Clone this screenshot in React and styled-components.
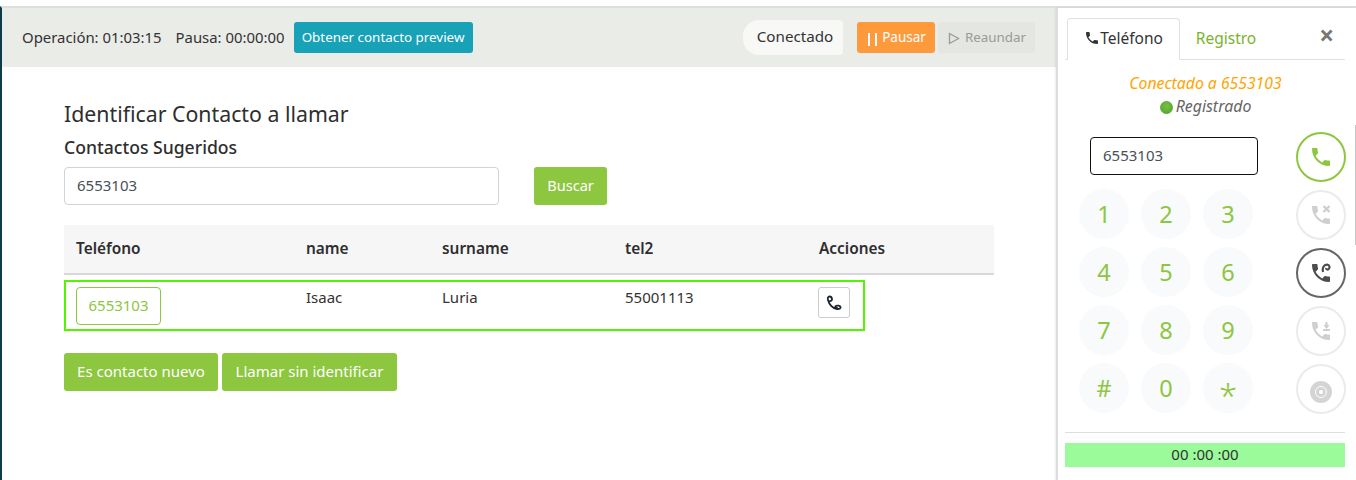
import styled, { createGlobalStyle } from "styled-components";

const GlobalStyle = createGlobalStyle`
  html, body {
    margin: 0;
    padding: 0;
    height: 480px;
    overflow: hidden;
    background: #fff;
    font-family: "Noto Sans", "Open Sans", sans-serif;
    color: #333;
  }
  * {
    box-sizing: border-box;
  }
`;

const Page = styled.div`
  height: 480px;
  padding-top: 6px;
`;

const Frame = styled.div`
  display: flex;
  height: 474px;
  border-top: 2px solid #dedede;
  border-left: 2px solid #0c3c4c;
`;

const Main = styled.main`
  flex: 1;
  min-width: 0;
`;

const StatusBar = styled.header`
  display: flex;
  align-items: center;
  height: 59px;
  padding: 0 21px 0 20px;
  background: #eaece8;
  font-size: 14.9px;
`;

const StatusText = styled.span`
  margin: 0 ${(p) => p.$gap}px 2px 0;
  white-space: nowrap;
`;

const Spacer = styled.div`
  flex: 1;
`;

const Pill = styled.div`
  display: flex;
  align-items: center;
  justify-content: center;
  width: 100px;
  height: 35px;
  margin-right: 14px;
  padding: 0 0 3px 4px;
  border-radius: 16px 4px 4px 16px;
  background: #f8f8f6;
  font-size: 15.2px;
`;

const Button = styled.button`
  display: inline-flex;
  align-items: center;
  justify-content: center;
  height: ${(p) => p.$height || 38}px;
  width: ${(p) => (p.$width ? `${p.$width}px` : "auto")};
  padding: 0 0 2px;
  border: 0;
  border-radius: 3px;
  background: ${(p) => p.$bg};
  color: ${(p) => p.$color || "#fff"};
  font-family: inherit;
  font-size: ${(p) => p.$size || 15}px;
  white-space: nowrap;
`;

const HeaderActions = styled.div`
  display: flex;
  gap: 3px;
`;

const PauseBars = styled.span`
  width: 9px;
  height: 13px;
  margin: 5px 5px 0 2px;
  border-left: 2px solid #fff;
  border-right: 2px solid #fff;
`;

const PlayMark = styled.svg`
  width: 12px;
  height: 13px;
  margin: 4px 5px 0 1px;
`;

const Content = styled.section`
  padding: 33px 62px;
`;

const Title = styled.h1`
  margin: 0;
  font-size: 21.3px;
  font-weight: 400;
  line-height: 28px;
  color: #2e2e2e;
`;

const Subtitle = styled.h2`
  margin: 7px 0 8px;
  font-size: 17.6px;
  font-weight: 500;
  line-height: 24px;
  color: #2e2e2e;
`;

const SearchRow = styled.div`
  display: flex;
  gap: 35px;
`;

const SearchInput = styled.div`
  display: flex;
  align-items: center;
  width: 435px;
  height: 38px;
  padding: 0 12px 2px;
  border: 1px solid #ced4da;
  border-radius: 4px;
  font-size: 15px;
  color: #495057;
`;

const Table = styled.div`
  width: 930px;
  margin-top: 20px;
`;

const columns = "230px 136px 183px 194px 1fr";

const HeadRow = styled.div`
  display: grid;
  grid-template-columns: ${columns};
  align-items: center;
  height: 50px;
  padding: 0 0 2px 12px;
  background: #f6f6f6;
  border-bottom: 2px solid #d8d8d8;
  font-size: 15.4px;
  font-weight: 600;
  color: #2e2e2e;
`;

const ContactRow = styled.div`
  display: grid;
  grid-template-columns: ${columns};
  align-items: start;
  width: 801px;
  height: 51px;
  margin-top: 5px;
  padding: 5px 0 0 10px;
  border: 2px solid #52f500;
  font-size: 15px;
  color: #333;
`;

const PhoneLink = styled.button`
  width: 85px;
  height: 38px;
  padding: 0 0 2px;
  border: 1px solid #8dc63f;
  border-radius: 4px;
  background: #fff;
  color: #8dc63f;
  font-family: inherit;
  font-size: 15px;
`;

const CallIconButton = styled.button`
  display: flex;
  align-items: center;
  justify-content: center;
  width: 32px;
  height: 31px;
  margin-left: -1px;
  padding: 0;
  border: 1px solid #ccc;
  border-radius: 3px;
  background: #fff;
`;

const ActionsRow = styled.div`
  display: flex;
  gap: 4px;
  margin-top: 22px;
`;

const Side = styled.aside`
  display: flex;
  flex-direction: column;
  width: 300px;
  border-left: 2px solid #dcdcdc;
  box-shadow: -1px 0 2px rgba(0, 0, 0, 0.08);
  padding: 10px 10px 0 7px;
`;

const Tabs = styled.nav`
  display: flex;
  align-items: flex-end;
  width: 280px;
  height: 42px;
  padding-left: 2px;
  border-bottom: 1px solid #dee2e6;
`;

const Tab = styled.div`
  display: flex;
  align-items: center;
  justify-content: center;
  width: ${(p) => p.$width}px;
  height: 42px;
  margin-bottom: -1px;
  padding-bottom: 2px;
  border: 1px solid ${(p) => (p.$active ? "#dee2e6" : "transparent")};
  border-bottom-color: ${(p) => (p.$active ? "#fff" : "transparent")};
  border-radius: 4px 4px 0 0;
  background: ${(p) => (p.$active ? "#fff" : "transparent")};
  color: ${(p) => (p.$active ? "#333" : "#7ab42e")};
  font-size: 15.5px;
`;

const Close = styled.span`
  margin: 0 0 12px auto;
  padding-right: 11px;
  color: #777;
  font-size: 26px;
  font-weight: 700;
  line-height: 24px;
`;

const CallStatus = styled.div`
  margin-top: 13px;
  text-align: center;
  font-size: 15.75px;
  font-style: italic;
  line-height: 21px;
  color: #ffa500;
`;

const Registered = styled.div`
  display: flex;
  align-items: center;
  justify-content: center;
  margin-top: 2px;
  font-size: 15.9px;
  font-style: italic;
  line-height: 21px;
  color: #666;
`;

const Dot = styled.span`
  width: 13px;
  height: 13px;
  margin: 2px 3px 0 0;
  border-radius: 50%;
  background: radial-gradient(circle at 50% 40%, #7cc03c, #45a035);
`;

const Dialer = styled.div`
  display: grid;
  grid-template-columns: 1fr 50px;
  margin: 15px 0 0 14px;
  width: 267px;
`;

const PadColumn = styled.div`
  display: flex;
  flex-direction: column;
`;

const NumberInput = styled.div`
  display: flex;
  align-items: center;
  width: 168px;
  height: 38px;
  margin: 5px 0 14px 11px;
  padding: 0 12px 2px;
  border: 1px solid #111;
  border-radius: 4px;
  font-size: 15px;
  color: #495057;
`;

const Keys = styled.div`
  display: grid;
  grid-template-columns: repeat(3, 50px);
  gap: 8px 12px;
`;

const Key = styled.div`
  display: flex;
  align-items: center;
  justify-content: center;
  width: 50px;
  height: 50px;
  border-radius: 50%;
  background: #f8fafb;
  color: #8dc63f;
  font-size: 23.5px;
`;

const StarKey = styled(Key)`
  padding-top: 14px;
  font-size: 33px;
  font-weight: 300;
`;

const CallColumn = styled.div`
  display: flex;
  flex-direction: column;
  gap: 8px;
`;

const RoundButton = styled.div`
  display: flex;
  align-items: center;
  justify-content: center;
  width: 50px;
  height: 50px;
  border: 2px solid ${(p) => p.$ring};
  border-radius: 50%;
  color: ${(p) => p.$ink};
`;

const Divider = styled.hr`
  width: 280px;
  margin: 18px 0 0 0;
  border: 0;
  border-top: 1px solid #ddd;
`;

const Timer = styled.div`
  width: 280px;
  height: 24px;
  margin-top: 10px;
  padding-bottom: 1px;
  background: #9bfb9b;
  text-align: center;
  font-size: 15px;
  line-height: 23px;
  color: #333;
`;

const ScrollEdge = styled.div`
  position: absolute;
  top: 125px;
  right: 0;
  width: 1px;
  height: 120px;
  background: #c8c8c8;
`;

const PHONE =
  "M6.62 10.79c1.44 2.83 3.76 5.14 6.59 6.59l2.2-2.2c.27-.27.67-.36 1.02-.24 1.12.37 2.33.57 3.57.57.55 0 1 .45 1 1V20c0 .55-.45 1-1 1-9.39 0-17-7.61-17-17 0-.55.45-1 1-1h3.5c.55 0 1 .45 1 1 0 1.25.2 2.45.57 3.57.11.35.03.74-.25 1.02l-2.2 2.2z";

const PhoneIcon = ({ size = 24, children }) => (
  <svg width={size} height={size} viewBox="0 0 24 24" fill="currentColor">
    <path d={PHONE} />
    {children}
  </svg>
);

const keys = ["1", "2", "3", "4", "5", "6", "7", "8", "9", "#", "0"];

const App = () => (
  <Page>
    <GlobalStyle />
    <Frame>
      <Main>
        <StatusBar>
          <StatusText $gap={14}>Operación: 01:03:15</StatusText>
          <StatusText $gap={9}>Pausa: 00:00:00</StatusText>
          <Button $bg="#17a2b8" $width={179} $height={31} $size={13.4}>
            Obtener contacto preview
          </Button>
          <Spacer />
          <Pill>Conectado</Pill>
          <HeaderActions>
            <Button $bg="#ff9a3c" $width={78} $height={31} $size={13.5}>
              <PauseBars />
              Pausar
            </Button>
            <Button $bg="#e4e6e2" $color="#9a9a9a" $width={97} $height={31} $size={13.4}>
              <PlayMark viewBox="0 0 12 13">
                <path d="M1.5 1.5 L10.5 6.5 L1.5 11.5 Z" fill="none" stroke="#9a9a9a" strokeWidth="1.3" />
              </PlayMark>
              Reaundar
            </Button>
          </HeaderActions>
        </StatusBar>
        <Content>
          <Title>Identificar Contacto a llamar</Title>
          <Subtitle>Contactos Sugeridos</Subtitle>
          <SearchRow>
            <SearchInput>6553103</SearchInput>
            <Button $bg="#8dc63f" $width={73} $size={14.6}>Buscar</Button>
          </SearchRow>
          <Table>
            <HeadRow>
              <span>Teléfono</span>
              <span>name</span>
              <span>surname</span>
              <span>tel2</span>
              <span>Acciones</span>
            </HeadRow>
            <ContactRow>
              <PhoneLink>6553103</PhoneLink>
              <span>Isaac</span>
              <span>Luria</span>
              <span>55001113</span>
              <CallIconButton>
                <svg width="16" height="16" viewBox="0 0 16 16" fill="none" stroke="#1c2430" strokeWidth="1.8" strokeLinecap="round">
                  <path d="M3.5 1.5 C2 1.5 1.5 3 2 5 C3 9 6.5 13.5 11 14 C13.5 14.3 15 13 14.5 11.8 C14 10.5 10.5 10 9.5 11.3 C9 12.2 10 12.8 11 13 M3.5 1.5 C5 1.5 6 3 6 4.5 C6 5.5 5 6 4.2 6" />
                </svg>
              </CallIconButton>
            </ContactRow>
          </Table>
          <ActionsRow>
            <Button $bg="#8dc63f" $width={154}>Es contacto nuevo</Button>
            <Button $bg="#8dc63f" $width={175}>Llamar sin identificar</Button>
          </ActionsRow>
        </Content>
      </Main>
      <Side>
        <Tabs>
          <Tab $active $width={113}>
            <PhoneIcon size={16} />
            Teléfono
          </Tab>
          <Tab $width={92}>Registro</Tab>
          <Close>×</Close>
        </Tabs>
        <CallStatus>Conectado a 6553103</CallStatus>
        <Registered>
          <Dot />
          Registrado
        </Registered>
        <Dialer>
          <PadColumn>
            <NumberInput>6553103</NumberInput>
            <Keys>
              {keys.map((key) => (
                <Key key={key}>{key}</Key>
              ))}
              <StarKey>*</StarKey>
            </Keys>
          </PadColumn>
          <CallColumn>
            <RoundButton $ring="#8dc63f" $ink="#8dc63f">
              <PhoneIcon size={24} />
            </RoundButton>
            <RoundButton $ring="#ebebeb" $ink="#cfcfcf">
              <PhoneIcon size={24}>
                <path d="M14.5 3 L20.5 9 M20.5 3 L14.5 9" fill="none" stroke="currentColor" strokeWidth="2.4" />
              </PhoneIcon>
            </RoundButton>
            <RoundButton $ring="#666" $ink="#4d4d4d">
              <PhoneIcon size={24}>
                <path d="M14 11 C12.8 7 15 3.4 18 3.6 C20.6 3.8 21.4 7 19.6 8.2 C18.4 9 17 8.2 17.2 7" fill="none" stroke="currentColor" strokeWidth="2.2" />
              </PhoneIcon>
            </RoundButton>
            <RoundButton $ring="#ebebeb" $ink="#cfcfcf">
              <PhoneIcon size={24}>
                <path d="M14 11 H21 M17.5 3 V7.5 M15.5 6 L17.5 8.5 L19.5 6" fill="none" stroke="currentColor" strokeWidth="2" />
              </PhoneIcon>
            </RoundButton>
            <RoundButton $ring="#ebebeb" $ink="#d4d4d4">
              <svg width="24" height="24" viewBox="0 0 24 24" style={{ marginTop: 6 }}>
                <circle cx="12" cy="12" r="11" fill="currentColor" />
                <circle cx="12" cy="12" r="5.5" fill="none" stroke="#fff" strokeWidth="1" />
                <circle cx="12" cy="12" r="2" fill="#fff" />
              </svg>
            </RoundButton>
          </CallColumn>
        </Dialer>
        <Divider />
        <Timer>00 :00 :00</Timer>
      </Side>
    </Frame>
    <ScrollEdge />
  </Page>
);

export default App;
